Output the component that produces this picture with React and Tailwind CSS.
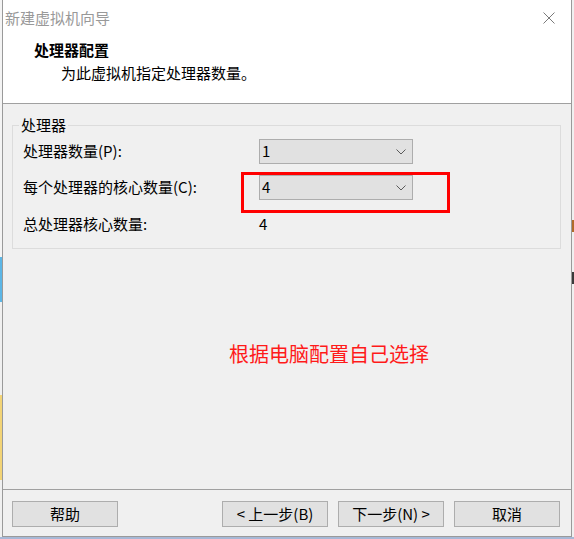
import React from "react"

const font = "font-['Noto_Sans_CJK_SC','Noto_Sans',sans-serif]"

function Chevron() {
  return (
    <svg width="10" height="6" viewBox="0 0 10 6" className="block">
      <path d="M0.5 0.5 L5 5 L9.5 0.5" fill="none" stroke="#5a5a5a" strokeWidth="1" />
    </svg>
  )
}

function Select({ value }) {
  return (
    <div className="h-[25px] w-[154px] flex items-center justify-between pl-[2px] pr-[6px] bg-[#e1e1e1] border border-[#adadad] text-[15px] text-black">
      <span>{value}</span>
      <Chevron />
    </div>
  )
}

function Button({ children }) {
  return (
    <button className="h-[26px] w-[106px] flex items-center justify-center bg-[#e1e1e1] border border-[#adadad] text-[15px] text-black">
      {children}
    </button>
  )
}

export default function App() {
  return (
    <div className={`w-[574px] h-[539px] flex flex-col bg-[#f0f0f0] overflow-hidden ${font}`}>
      <div className="h-[537px] flex">
        {/* desktop peeking out on the left */}
        <div className="w-[2px] flex flex-col">
          <div className="h-[257px] bg-[#f4f4f4]" />
          <div className="h-[45px] bg-[#5cb6e6]" />
          <div className="h-[93px] bg-[#f0f0f0]" />
          <div className="h-[85px] bg-[#f3d476]" />
          <div className="flex-1 bg-[#f0f0f0]" />
        </div>

        <div className="relative w-[570px] h-[537px] flex flex-col border-x border-b border-[#9a9a9a] bg-[#f0f0f0]">
          <div className="bg-white">
            <div className="h-[36px] flex items-center justify-between pl-[2px] pr-[16px]">
              <span className="text-[15px] text-[#999999]">新建虚拟机向导</span>
              <svg width="12" height="12" viewBox="0 0 12 12">
                <path d="M0.5 0.5 L11.5 11.5 M11.5 0.5 L0.5 11.5" stroke="#7a7a7a" strokeWidth="1" />
              </svg>
            </div>
            <div className="h-[67px] pt-[4px]">
              <div className="pl-[31px] h-[20px] leading-[20px] text-[15px] font-bold text-black">处理器配置</div>
              <div className="pl-[58px] mt-[3px] h-[20px] leading-[20px] text-[15px] text-black">为此虚拟机指定处理器数量。</div>
            </div>
          </div>
          <div className="h-px bg-[#a0a0a0]" />

          <div className="relative mt-[21px] ml-[9px] mr-[10px] border border-[#dcdcdc] pt-[13px] pb-[11px] pl-[10px]">
            <span className="absolute left-[6px] top-[-11px] px-[2px] bg-[#f0f0f0] text-[15px] leading-[20px] text-black">处理器</span>
            <div className="grid grid-cols-[236px_154px] items-center text-[15px] text-black">
              <div className="h-[25px] flex items-center">处理器数量(P):</div>
              <Select value="1" />
              <div className="h-[25px] mt-[11px] flex items-center">每个处理器的核心数量(C):</div>
              <div className="mt-[11px]">
                <Select value="4" />
              </div>
              <div className="h-[25px] mt-[12px] flex items-center">总处理器核心数量:</div>
              <div className="h-[25px] mt-[12px] flex items-center">4</div>
            </div>
          </div>

          <div className="mt-[91px] pl-[226px] h-[28px] leading-[28px] text-[20px] text-[#ff1a1a]">
            根据电脑配置自己选择
          </div>

          <div className="flex-1" />

          <div className="border-t border-[#a0a0a0] pt-[11px] pb-[9px] pl-[9px] pr-[11px] flex">
            <Button>帮助</Button>
            <div className="flex-1" />
            <div className="flex gap-[10px]">
              <Button>&lt; 上一步(B)</Button>
              <Button>下一步(N) &gt;</Button>
              <Button>取消</Button>
            </div>
          </div>

          {/* red annotation frame */}
          <div className="absolute left-[238px] top-[172px] w-[209px] h-[41px] border-[3px] border-[#ff0000]" />
        </div>

        <div className="w-[2px] flex flex-col">
          <div className="h-[220px] bg-[#f0f0f0]" />
          <div className="h-[12px] bg-[#b06a2a]" />
          <div className="h-[40px] bg-[#f0f0f0]" />
          <div className="h-[12px] bg-[#3a3a3a]" />
          <div className="flex-1 bg-[#f0f0f0]" />
        </div>
      </div>
      <div className="flex-1 bg-[#a7b8d6]" />
    </div>
  )
}
